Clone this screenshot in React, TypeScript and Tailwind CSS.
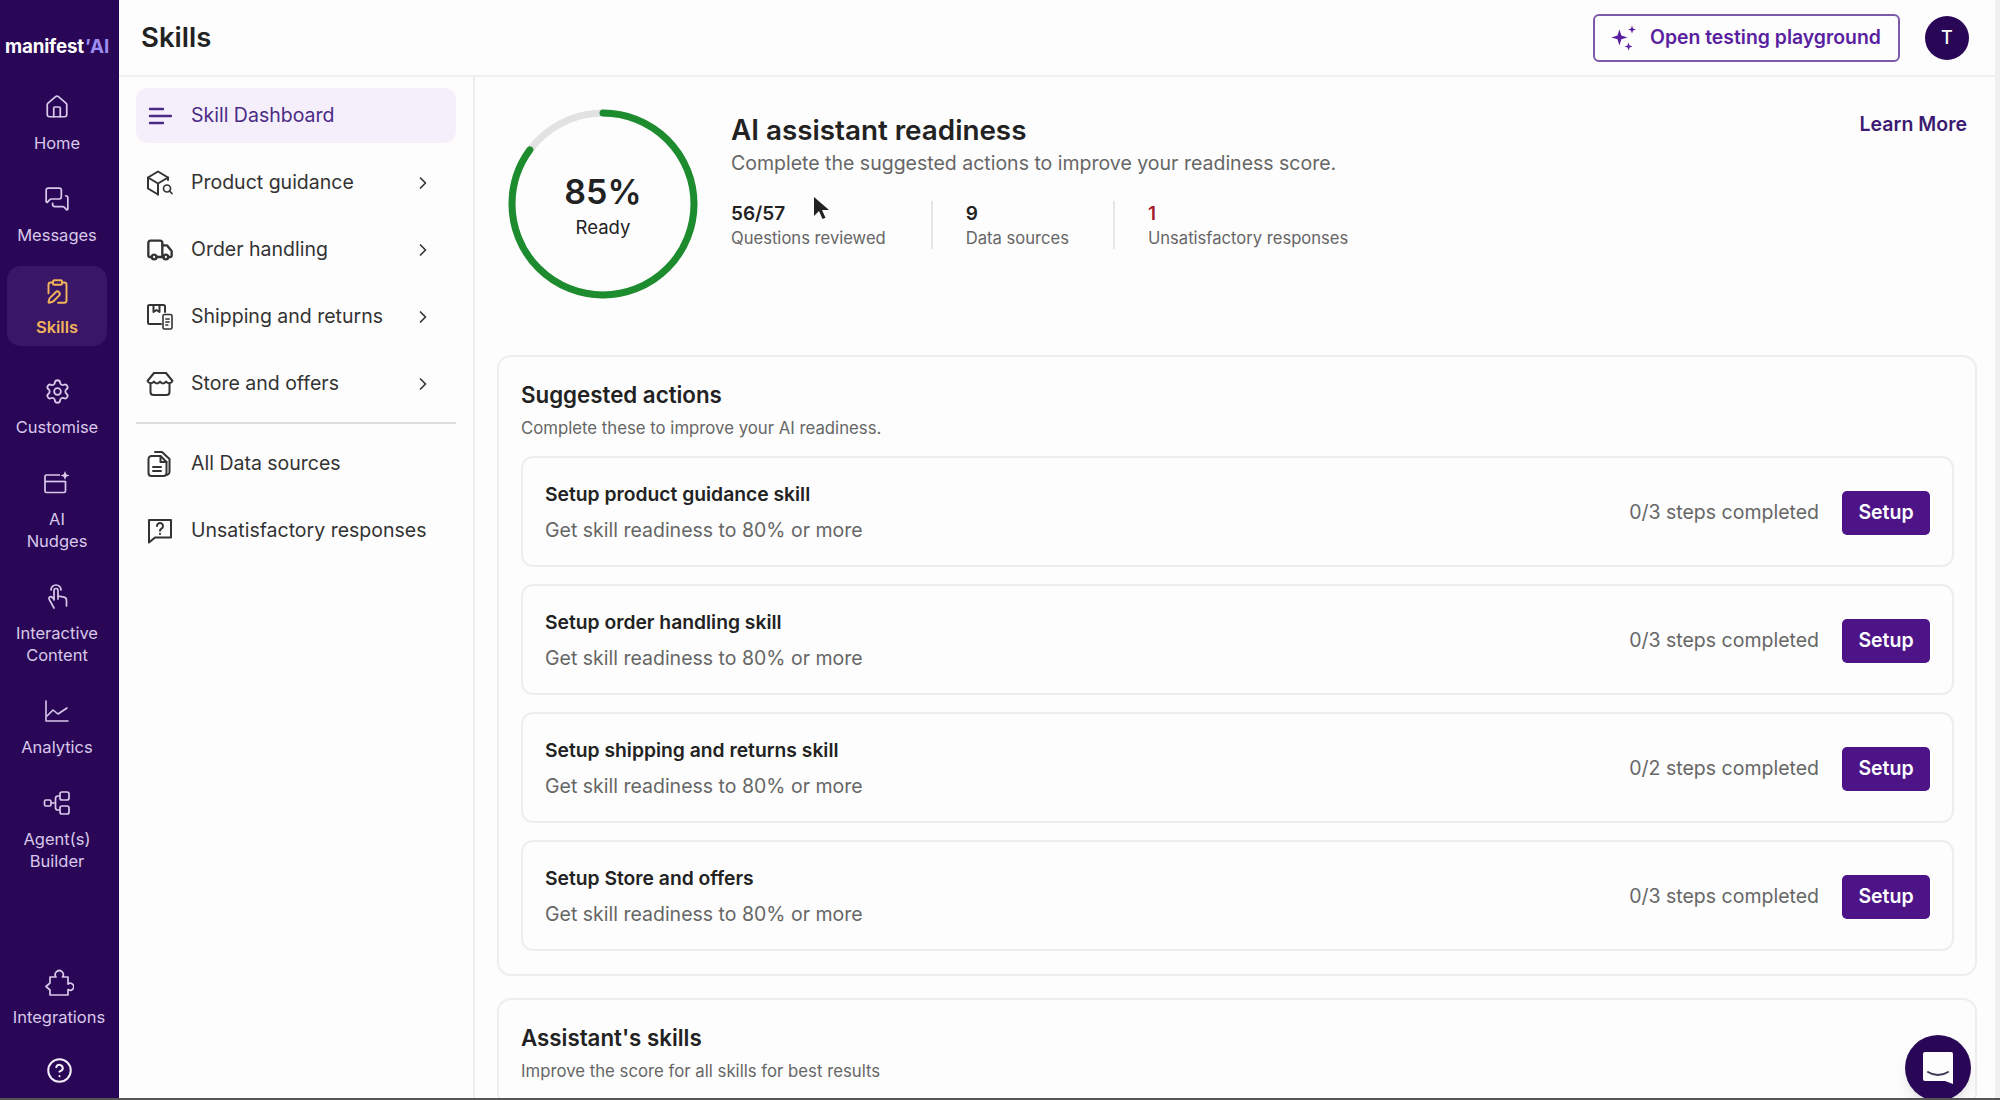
import type { ReactNode } from "react";
import { ChevronRight, ClipboardPen, CircleHelp, House, MessagesSquare, Settings, Truck } from "lucide-react";

const font = { fontFamily: "Inter, 'Noto Sans', sans-serif" };

function NudgeIcon() {
  return (
    <svg width="28" height="26" viewBox="0 0 28 26" fill="none" stroke="currentColor" strokeWidth="1.7" strokeLinejoin="round">
      <path d="M17 5H3.5a1.5 1.5 0 0 0-1.500 1.500V21a1.500 1.500 0 0 0 1.500 1.500H21a1.500 1.500 0 0 0 1.500-1.500V11" />
      <path d="M2 11.500h20.500" />
      <path d="M22 1l1.300 3.200L26.500 5.500l-3.200 1.300L22 10l-1.300-3.200L17.500 5.500l3.200-1.300z" fill="currentColor" stroke="none" />
    </svg>
  );
}

function TouchIcon() {
  return (
    <svg width="26" height="28" viewBox="0 0 26 28" fill="none" stroke="currentColor" strokeWidth="1.7" strokeLinecap="round" strokeLinejoin="round">
      <path d="M7 7a5 5 0 0 1 10 0" />
      <path d="M10 17V7.500a2 2 0 0 1 4 0V13l6 1.200c1.500.3 2.500 1.500 2.500 3V23" />
      <path d="M10 16l-2.200-2a1.800 1.800 0 0 0-2.600 2.400L10 25" />
      <path d="M14 13v3" />
    </svg>
  );
}

function ChartIcon() {
  return (
    <svg width="26" height="24" viewBox="0 0 26 24" fill="none" stroke="currentColor" strokeWidth="1.600" strokeLinecap="round" strokeLinejoin="round">
      <path d="M2 2v20h22" />
      <path d="M3 17l6-6 5 4 9-6" />
    </svg>
  );
}

function AgentIcon() {
  return (
    <svg width="28" height="26" viewBox="0 0 28 26" fill="none" stroke="currentColor" strokeWidth="1.700" strokeLinejoin="round">
      <rect x="1.500" y="10" width="6.500" height="6" rx="1.500" />
      <rect x="17" y="2" width="9" height="8" rx="2" />
      <rect x="17" y="16" width="9" height="8" rx="2" />
      <path d="M8 13h4.500M17 6h-2a2.500 2.500 0 0 0-2.500 2.500v9A2.500 2.500 0 0 0 15 20h2" />
    </svg>
  );
}

function PuzzleIcon() {
  return (
    <svg width="30" height="30" viewBox="0 0 30 30" fill="none" stroke="currentColor" strokeWidth="1.700" strokeLinejoin="round" strokeLinecap="round">
      <path d="M6 27H24v-5.500a3.500 3.500 0 1 0 0-5.500V9h-5.500a4 4 0 1 0-6.500 0H6v6l-4 3.500L6 22z" />
    </svg>
  );
}

function BarsIcon() {
  return (
    <svg width="24" height="24" viewBox="0 0 24 24" fill="none" stroke="currentColor" strokeWidth="2.400" strokeLinecap="round">
      <path d="M2 5h13M2 12h21M2 19h13" />
    </svg>
  );
}

function ProductIcon() {
  return (
    <svg width="28" height="28" viewBox="0 0 28 28" fill="none" stroke="currentColor" strokeWidth="2" strokeLinejoin="round" strokeLinecap="round">
      <path d="M22 11V8.500L12 2.500 2 8.500v11l10 6" />
      <path d="M2 8.500l10 6 10-6M12 14.500v11" />
      <circle cx="21" cy="19.500" r="3.500" strokeWidth="1.700" />
      <path d="M23.500 22l2.500 2.500" strokeWidth="1.700" />
    </svg>
  );
}

function ShippingIcon() {
  return (
    <svg width="28" height="28" viewBox="0 0 28 28" fill="none" stroke="currentColor" strokeWidth="2" strokeLinejoin="round" strokeLinecap="round">
      <path d="M15 21H3.500A1.500 1.500 0 0 1 2 19.500v-16A1.500 1.500 0 0 1 3.500 2h14A1.500 1.500 0 0 1 19 3.500V9" />
      <path d="M7.500 2v7l3-2 3 2V2" />
      <rect x="17" y="11.500" width="9" height="14.500" rx="1.500" strokeWidth="1.600" />
      <path d="M19.800 16h3.400M19.800 19h3.400M19.800 22h2" strokeWidth="1.500" />
    </svg>
  );
}

function StoreIcon() {
  return (
    <svg width="28" height="26" viewBox="0 0 28 26" fill="none" stroke="currentColor" strokeWidth="2" strokeLinejoin="round" strokeLinecap="round">
      <path d="M8 2h12l6.500 8c-1 2.500-5 3-6.500.5-1.500 2.500-4.500 2.500-6 0-1.500 2.500-4.500 2.500-6 0-1.500 2.500-5.500 2-6.500-.5z" />
      <path d="M4.500 12.500V21a3 3 0 0 0 3 3h13a3 3 0 0 0 3-3v-8.500" />
    </svg>
  );
}

function FilesIcon() {
  return (
    <svg width="26" height="28" viewBox="0 0 26 28" fill="none" stroke="currentColor" strokeWidth="2" strokeLinejoin="round" strokeLinecap="round">
      <path d="M8 2h7l7.500 7v13a3 3 0 0 1-2 2.800" />
      <path d="M4.500 6h9l6 6v11a3 3 0 0 1-3 3h-12a3 3 0 0 1-3-3V9a3 3 0 0 1 3-3z" />
      <path d="M13.500 6v6h6M6 17h8M6 21h8" />
    </svg>
  );
}

function ChatQuestionIcon() {
  return (
    <svg width="26" height="26" viewBox="0 0 26 26" fill="none" stroke="currentColor" strokeWidth="2" strokeLinejoin="round" strokeLinecap="round">
      <path d="M2 2h22v17.500H8L2 24.500z" />
      <path d="M10 8a3 3 0 1 1 4.500 2.600c-1 .6-1.500 1-1.500 2.200" />
      <path d="M13 15.800v.2" />
    </svg>
  );
}

function SparkIcon() {
  return (
    <svg width="32" height="32" viewBox="0 0 28 28" fill="currentColor">
      <path d="M10 6.500l1.700 5.300L17 13.500l-5.300 1.700L10 20.500l-1.700-5.300L3 13.500l5.300-1.700z" />
      <path d="M21 3l.9 2.600 2.600.9-2.600.9L21 10l-.9-2.600-2.600-.9 2.600-.9z" />
      <path d="M18 18l.9 2.600 2.600.9-2.600.9-.9 2.600-.9-2.600-2.600-.9 2.600-.9z" />
    </svg>
  );
}

function RailItem({ icon, label, className = "", active = false }: { icon: ReactNode; label: string; className?: string; active?: boolean }) {
  return (
    <div
      className={`flex flex-col items-center text-center text-[16.500px] leading-[22px] ${
        active ? "mx-[7px] rounded-[14px] bg-[#3a1766] pt-[12px] pb-[8px] font-semibold text-[#f2b45a]" : "text-[#d8c8ea]"
      } ${className}`}
    >
      <div className="flex h-[26px] items-center justify-center">{icon}</div>
      <div className="mt-[12px]">{label}</div>
    </div>
  );
}

function Rail() {
  return (
    <aside className="flex w-[119px] shrink-0 flex-col bg-[#2a0756] pb-[14px] pr-[5px]">
      <div className="flex h-[94px] items-center justify-center text-[18.800px] font-bold tracking-[-0.2px] text-white">
        manifest<span className="italic text-[#9d8cf0]">'</span><span className="text-[#9d8cf0]">AI</span>
      </div>
      <RailItem icon={<House size={26} strokeWidth={1.6} />} label="Home" />
      <RailItem icon={<MessagesSquare size={26} strokeWidth={1.6} />} label="Messages" className="mt-[32px]" />
      <RailItem icon={<ClipboardPen size={27} strokeWidth={1.7} />} label="Skills" active className="mt-[20px]" />
      <RailItem icon={<Settings size={27} strokeWidth={1.6} />} label="Customise" className="mt-[32px]" />
      <RailItem icon={<NudgeIcon />} label="AI Nudges" className="mt-[32px] px-[30px]" />
      <RailItem icon={<TouchIcon />} label="Interactive Content" className="mt-[32px] px-[10px]" />
      <RailItem icon={<ChartIcon />} label="Analytics" className="mt-[32px]" />
      <RailItem icon={<AgentIcon />} label="Agent(s) Builder" className="mt-[32px] px-[18px]" />
      <RailItem icon={<PuzzleIcon />} label="Integrations" className="mt-auto translate-x-[2px] [&>div:last-child]:mt-[10px]" />
      <div className="mt-[29px] flex translate-x-[2px] justify-center text-[#f2ecf8]">
        <CircleHelp size={27} strokeWidth={1.8} />
      </div>
    </aside>
  );
}

function NavRow({ icon, label, chevron = false, active = false }: { icon: ReactNode; label: string; chevron?: boolean; active?: boolean }) {
  return (
    <div
      className={`flex h-[55px] items-center rounded-[12px] pl-[9px] pr-[23px] text-[19.500px] ${
        active ? "bg-[#f4effb] text-[#4b2a85]" : "text-[#333333]"
      }`}
    >
      <div className="flex w-[30px] justify-center">{icon}</div>
      <span className="ml-[16px]">{label}</span>
      {chevron && <ChevronRight size={20} className="ml-auto" strokeWidth={2} />}
    </div>
  );
}

function SideNav() {
  return (
    <nav className="flex w-[356px] shrink-0 flex-col gap-[12px] border-r-2 border-[#eeeeee] pl-[17px] pr-[17px] pt-[11px]">
      <NavRow icon={<BarsIcon />} label="Skill Dashboard" active />
      <NavRow icon={<ProductIcon />} label="Product guidance" chevron />
      <NavRow icon={<Truck size={28} strokeWidth={2} />} label="Order handling" chevron />
      <NavRow icon={<ShippingIcon />} label="Shipping and returns" chevron />
      <NavRow icon={<StoreIcon />} label="Store and offers" chevron />
      <div className="mt-[-1px] h-[2px] bg-[#dddddd]" />
      <NavRow icon={<FilesIcon />} label="All Data sources" />
      <NavRow icon={<ChatQuestionIcon />} label="Unsatisfactory responses" />
    </nav>
  );
}

function Ring() {
  const r = 91;
  const c = 2 * Math.PI * r;
  return (
    <div className="relative h-[190px] w-[190px] shrink-0">
      <svg width="190" height="190" viewBox="0 0 190 190" className="-rotate-90">
        <circle cx="95" cy="95" r={r} fill="none" stroke="#e2e2e2" strokeWidth="7" />
        <circle cx="95" cy="95" r={r} fill="none" stroke="#1c8c2e" strokeWidth="7" strokeLinecap="round" strokeDasharray={`${c * 0.85} ${c}`} />
      </svg>
      <div className="absolute inset-0 flex flex-col items-center justify-center pt-[2px] text-[#222222]">
        <div className="text-[34px] font-semibold leading-[44px]">85%</div>
        <div className="text-[18.500px] leading-[26px]">Ready</div>
      </div>
    </div>
  );
}

function Stat({ value, label, className = "" }: { value: string; label: string; className?: string }) {
  return (
    <div className={className}>
      <div className="text-[19px] font-semibold leading-[26px] text-[#222222]">{value}</div>
      <div className="text-[16.600px] leading-[22px] text-[#666666]">{label}</div>
    </div>
  );
}

const actions = [
  { title: "Setup product guidance skill", steps: "0/3 steps completed" },
  { title: "Setup order handling skill", steps: "0/3 steps completed" },
  { title: "Setup shipping and returns skill", steps: "0/2 steps completed" },
  { title: "Setup Store and offers", steps: "0/3 steps completed" },
];

function ActionCard({ title, steps }: { title: string; steps: string }) {
  return (
    <div className="flex h-[111px] items-center rounded-[12px] border-2 border-[#eeeeee] pl-[22px] pr-[22px]">
      <div>
        <div className="text-[19.300px] font-semibold leading-[26px] text-[#222222]">{title}</div>
        <div className="mt-[10px] text-[19.500px] leading-[26px] text-[#666666]">Get skill readiness to 80% or more</div>
      </div>
      <div className="ml-auto mt-[2px] text-[19.500px] text-[#666666]">{steps}</div>
      <button className="ml-[23px] mt-[2px] h-[44px] w-[88px] rounded-[5px] bg-[#4c1487] text-[19.500px] font-semibold text-white">Setup</button>
    </div>
  );
}

function Main() {
  return (
    <main className="flex min-w-0 flex-1 flex-col overflow-hidden pl-[22px] pr-[18px]">
      <div className="flex shrink-0 items-start pl-[11px] pt-[32px]">
        <Ring />
        <div className="ml-[33px] pt-[4px]">
          <h2 className="text-[27.800px] font-semibold leading-[34px] text-[#222222]">AI assistant readiness</h2>
          <p className="mt-[3px] text-[19.500px] leading-[26px] text-[#666666]">Complete the suggested actions to improve your readiness score.</p>
          <div className="mt-[25px] flex">
            <Stat value="56/57" label="Questions reviewed" className="pr-[45px]" />
            <Stat value="9" label="Data sources" className="border-l-2 border-[#e6e6e6] pl-[33px] pr-[44px]" />
            <Stat value="1" label="Unsatisfactory responses" className="border-l-2 border-[#e6e6e6] pl-[33px] [&>div:first-child]:text-[#a51c2c]" />
          </div>
        </div>
        <a className="ml-auto mr-[10px] mt-[1px] text-[19.500px] font-semibold text-[#3c1a72]">Learn More</a>
      </div>

      <section className="mt-[56px] shrink-0 rounded-[14px] border-2 border-[#eeeeee] pb-[23px] pl-[22px] pr-[21px] pt-[23px]">
        <h3 className="text-[22.300px] font-semibold leading-[30px] text-[#222222]">Suggested actions</h3>
        <p className="mt-[6px] text-[16.750px] leading-[24px] text-[#666666]">Complete these to improve your AI readiness.</p>
        <div className="mt-[16px] flex flex-col gap-[17px]">
          {actions.map((a) => (
            <ActionCard key={a.title} title={a.title} steps={a.steps} />
          ))}
        </div>
      </section>

      <section className="mt-[22px] shrink-0 rounded-[14px] border-2 border-[#eeeeee] pb-[22px] pl-[22px] pr-[21px] pt-[23px]">
        <h3 className="text-[22.300px] font-semibold leading-[30px] text-[#222222]">Assistant's skills</h3>
        <p className="mt-[6px] text-[16.750px] leading-[24px] text-[#666666]">Improve the score for all skills for best results</p>
      </section>
    </main>
  );
}

export default function App() {
  return (
    <div className="relative flex h-[1100px] w-[2000px] overflow-hidden border-b-2 border-[#555555] bg-[#fdfdfd]" style={font}>
      <Rail />
      <div className="flex min-w-0 flex-1 flex-col border-r-[5px] border-[#f0f0f0]">
        <header className="flex h-[77px] shrink-0 items-center border-b-2 border-[#f0f0f0] pl-[22px] pr-[26px]">
          <h1 className="text-[27.500px] font-semibold text-[#222222]">Skills</h1>
          <button className="ml-auto flex h-[48px] w-[307px] items-center rounded-[6px] border-2 border-[#7d5aa8] pl-[13px] text-[19.400px] font-semibold text-[#5a1fa0]">
            <SparkIcon />
            <span className="ml-[10px]">Open testing playground</span>
          </button>
          <div className="ml-[25px] flex h-[44px] w-[44px] items-center justify-center rounded-full bg-[#2a0756] text-[18px] font-medium text-white">T</div>
        </header>
        <div className="flex min-h-0 flex-1">
          <SideNav />
          <Main />
        </div>
      </div>

      <svg width="18" height="26" viewBox="0 0 18 26" className="absolute left-[812px] top-[196px]">
        <path d="M2 1v19l5-5 3.500 8 3-1.300L10 14h7z" fill="#222222" />
      </svg>

      <div className="absolute left-[1905px] top-[1035px] flex h-[66px] w-[66px] items-center justify-center rounded-full bg-[#2a0756] shadow-lg">
        <svg width="32" height="34" viewBox="0 0 32 34">
          <path d="M3 1h26a2 2 0 0 1 2 2v30l-8-3H3a2 2 0 0 1-2-2V3a2 2 0 0 1 2-2z" fill="#fdfdfd" />
          <path d="M6 21c6 4 14 4 20 0" fill="none" stroke="#3f3a55" strokeWidth="2" strokeLinecap="round" />
        </svg>
      </div>
    </div>
  );
}
